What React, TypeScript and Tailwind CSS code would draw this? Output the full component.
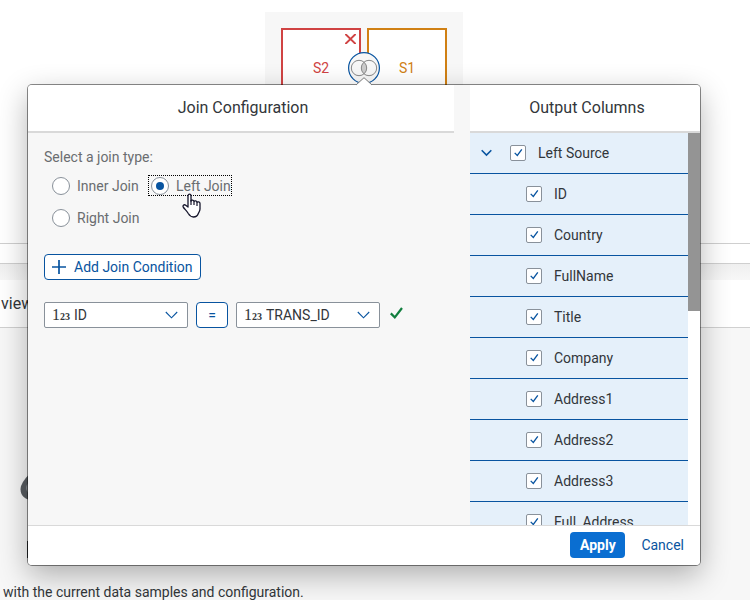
import { useState } from "react";

const columns = ["ID", "Country", "FullName", "Title", "Company", "Address1", "Address2", "Address3", "Full_Address"];
const joinTypes = ["Inner Join", "Left Join", "Right Join"];

function NumberIcon() {
  return (
    <span aria-hidden="true" className="pointer-events-none flex items-baseline font-['Liberation_Serif',serif] leading-4 text-[#32363a]">
      <span className="text-base">1</span>
      <span className="text-[10px] font-bold">23</span>
    </span>
  );
}

function ColumnSelect({ label, value }: { label: string; value: string }) {
  return (
    <div className="relative flex h-[26px] w-36 items-center">
      <select
        aria-label={label}
        className="h-full w-full appearance-none rounded-xs border border-[#89919a] bg-white pr-8 pl-[29px] text-sm text-[#32363a]"
      >
        <option>{value}</option>
      </select>
      <span className="pointer-events-none absolute left-2">
        <NumberIcon />
      </span>
      <svg className="pointer-events-none absolute right-2.5" width="13" height="8" viewBox="0 0 13 8" fill="none" stroke="#0854a0" strokeWidth="1.1">
        <path d="M.8 1l5.700 5.800L12.200 1" />
      </svg>
    </div>
  );
}

function CheckRow({ label, parent = false }: { label: string; parent?: boolean }) {
  return (
    <li className="flex h-[41px] shrink-0 items-center border-b border-[#0854a0] bg-[#e5f0fa]">
      <div className={parent ? "w-10 pl-[11px]" : "w-14"}>
        {parent && (
          <button type="button" aria-label="Collapse" className="block">
            <svg width="11" height="8" viewBox="0 0 11 8" fill="none" stroke="#0854a0" strokeWidth="1.6">
              <path d="M.7 1.200l4.800 4.900 4.800-4.900" />
            </svg>
          </button>
        )}
      </div>
      <label className="flex items-center gap-3 text-sm leading-5 text-[#32363a]">
        <span className="grid">
          <input
            type="checkbox"
            defaultChecked
            className="peer col-start-1 row-start-1 size-4 appearance-none rounded-xs border border-[#89919a] bg-white"
          />
          <svg
            className="pointer-events-none invisible col-start-1 row-start-1 peer-checked:visible"
            width="16" height="16" viewBox="0 0 16 16" fill="none" stroke="#0854a0" strokeWidth="1.3"
          >
            <path d="M4.700 7.900l2.600 2.600 4.500-6.200" />
          </svg>
        </span>
        {label}
      </label>
    </li>
  );
}

function JoinDialog() {
  const [joinType, setJoinType] = useState("Left Join");
  return (
    <section
      role="dialog"
      aria-label="Join Configuration"
      className="absolute top-[85px] right-[50px] left-7 rounded bg-[#f7f7f7] shadow-[0_0_0_1px_rgba(0,0,0,0.45),0_10px_30px_0_rgba(0,0,0,0.3)]"
    >
      <svg className="absolute -top-2 left-1/2 -translate-x-1/2" width="18" height="9" viewBox="0 0 18 9">
        <path d="M1 8L9 .7 17 8v1H1z" fill="#fff" />
        <path d="M1 8L9 .7 17 8" fill="none" stroke="#777" strokeWidth="1" />
      </svg>
      <div className="flex overflow-hidden rounded-t">
        <div className="min-w-0 flex-1">
          <h2 className="h-12 border-b-2 border-[#d9d9d9] bg-white pl-1 text-center text-base leading-[46px] text-[#32363a]">
            Join Configuration
          </h2>
          <div className="px-4 pt-3.5">
            <fieldset>
              <legend className="text-sm leading-5 text-[#6a6d70]">Select a join type:</legend>
              <div className="mt-2 ml-[5px] grid grid-cols-[92px_84px] gap-x-[7px] gap-y-[11px]">
                {joinTypes.map((type) => (
                  <label
                    key={type}
                    className={`flex h-[21px] items-center gap-[7px] border border-dotted px-0.5 text-sm whitespace-nowrap text-[#6a6d70] ${
                      joinType === type ? "border-black" : "border-transparent"
                    }`}
                  >
                    <input
                      type="radio"
                      name="join-type"
                      checked={joinType === type}
                      onChange={() => setJoinType(type)}
                      className="grid size-[18px] shrink-0 appearance-none place-items-center rounded-full border border-[#89919a] bg-white checked:before:size-2 checked:before:rounded-full checked:before:bg-[#0854a0] checked:before:content-['']"
                    />
                    {type}
                  </label>
                ))}
              </div>
            </fieldset>
            <button
              type="button"
              className="mt-[26px] flex h-[26px] items-center gap-2 rounded border border-[#0854a0] bg-white px-[7px] text-sm text-[#0854a0]"
            >
              <svg width="14" height="14" viewBox="0 0 14 14" fill="none" stroke="#0854a0" strokeWidth="1.7">
                <path d="M7 0v14M0 7h14" />
              </svg>
              Add Join Condition
            </button>
            <div className="mt-[22px] flex items-center gap-2">
              <ColumnSelect label="Left column" value="ID" />
              <button type="button" className="h-[26px] w-8 rounded border border-[#0854a0] bg-white text-sm text-[#0854a0]">
                =
              </button>
              <ColumnSelect label="Right column" value="TRANS_ID" />
              <svg className="-mt-1" width="16" height="14" viewBox="0 0 16 14" fill="none" stroke="#107e3e" strokeWidth="2.2">
                <path d="M2.800 7.400l4 4L14 2" />
              </svg>
            </div>
          </div>
        </div>
        <div className="ml-4 w-[230px] shrink-0">
          <h2 className="h-12 border-b-2 border-[#d9d9d9] bg-white pl-1 text-center text-base leading-[46px] text-[#32363a]">
            Output Columns
          </h2>
          <div className="flex h-[392px] bg-white">
            <ul className="flex flex-1 flex-col overflow-hidden">
              <CheckRow label="Left Source" parent />
              {columns.map((name) => (
                <CheckRow key={name} label={name} />
              ))}
            </ul>
            <div className="w-3">
              <div className="h-[178px] bg-[#949494]" />
            </div>
          </div>
        </div>
      </div>
      <footer className="flex h-10 justify-end gap-2 rounded-b border-t border-[#d9d9d9] bg-white pt-1.5 pr-2">
        <button type="button" className="h-[26px] w-[55px] rounded bg-[#0a6ed1] text-sm font-bold text-white">
          Apply
        </button>
        <button type="button" className="h-[26px] px-2 text-sm text-[#0854a0]">
          Cancel
        </button>
      </footer>
      <svg className="pointer-events-none absolute top-[108px] left-[154px]" width="20" height="25" viewBox="0 0 20 25">
        <path
          d="M6 14V3.200C6 .4 9 .4 9 3.200V8c.3-1.400 3-1.300 3 .6.4-1.200 3-1 3 .8.5-1 3-.7 3 1.100V16c0 2-1 2.700-1.800 4.800C15.500 23 14 24 11.500 24 8.500 24 7.500 22.500 6.300 20.500 5 18 3 16.500 1.500 14.500.2 12.700 2 11 3.700 12.300z"
          fill="#fff"
          stroke="#15152b"
          strokeWidth="1.3"
          strokeLinejoin="round"
        />
        <path d="M9 7v5M12 8.500V12M15 9.500V13" stroke="#15152b" strokeWidth="1.2" />
      </svg>
    </section>
  );
}

export default function App() {
  return (
    <main className="relative min-h-screen overflow-hidden bg-[#f7f7f7] font-[Roboto,'Liberation_Sans',sans-serif] text-[#32363a]">
      <div className="flex h-[243px] justify-center bg-white pt-3 pr-[22px]">
        <div className="relative flex h-40 w-[198px] gap-1.5 bg-[#f7f7f7] px-4 pt-4 text-sm">
          <div className="relative flex h-20 w-20 items-center justify-center border-2 border-[#d04343] bg-white text-[#d04343]">
            S2
            <button type="button" aria-label="Remove S2" className="absolute top-1 right-[3px]">
              <svg width="11" height="10" viewBox="0 0 11 10" stroke="#d04343" strokeWidth="2">
                <path d="M.3 0l10.400 10M10.700 0L.3 10" />
              </svg>
            </button>
          </div>
          <div className="flex h-20 w-20 items-center justify-center border-2 border-[#d08014] bg-white text-[#d08014]">S1</div>
          <svg className="absolute top-10 left-[83px]" width="32" height="32" viewBox="0 0 32 32" fill="none">
            <circle cx="16" cy="16" r="15.400" fill="#f7f7f7" stroke="#0854a0" strokeWidth="1.2" />
            <path d="M16 10a8 8 0 0 1 0 12 8 8 0 0 1 0-12" fill="#ccc" />
            <g stroke="#888" strokeWidth="1">
              <circle cx="11" cy="16" r="7.700" />
              <circle cx="21" cy="16" r="7.700" />
            </g>
          </svg>
        </div>
      </div>
      <div className="h-[21px] border-y border-[#cfcfcf] bg-white" />
      <div className="h-4 bg-gradient-to-b from-[#efefef] to-[#f7f7f7]" />
      <h1 className="h-12 border-b border-[#d0d0d0] bg-white pl-px text-base leading-[47px]">view</h1>
      <div className="pt-[142px]">
        <svg className="ml-5" width="40" height="30" viewBox="0 0 40 30">
          <path d="M14 0Q4 8 1 16C-1 24 4 30 12 30h28V0z" fill="#595d62" />
          <circle cx="12" cy="18" r="6" fill="#8c9095" />
        </svg>
        <div className="mt-[41px] ml-[27px] h-[17px] w-0.5 bg-[#32363a]" />
        <p className="mt-6 pl-[3px] text-sm leading-5">with the current data samples and configuration.</p>
      </div>
      <JoinDialog />
    </main>
  );
}
